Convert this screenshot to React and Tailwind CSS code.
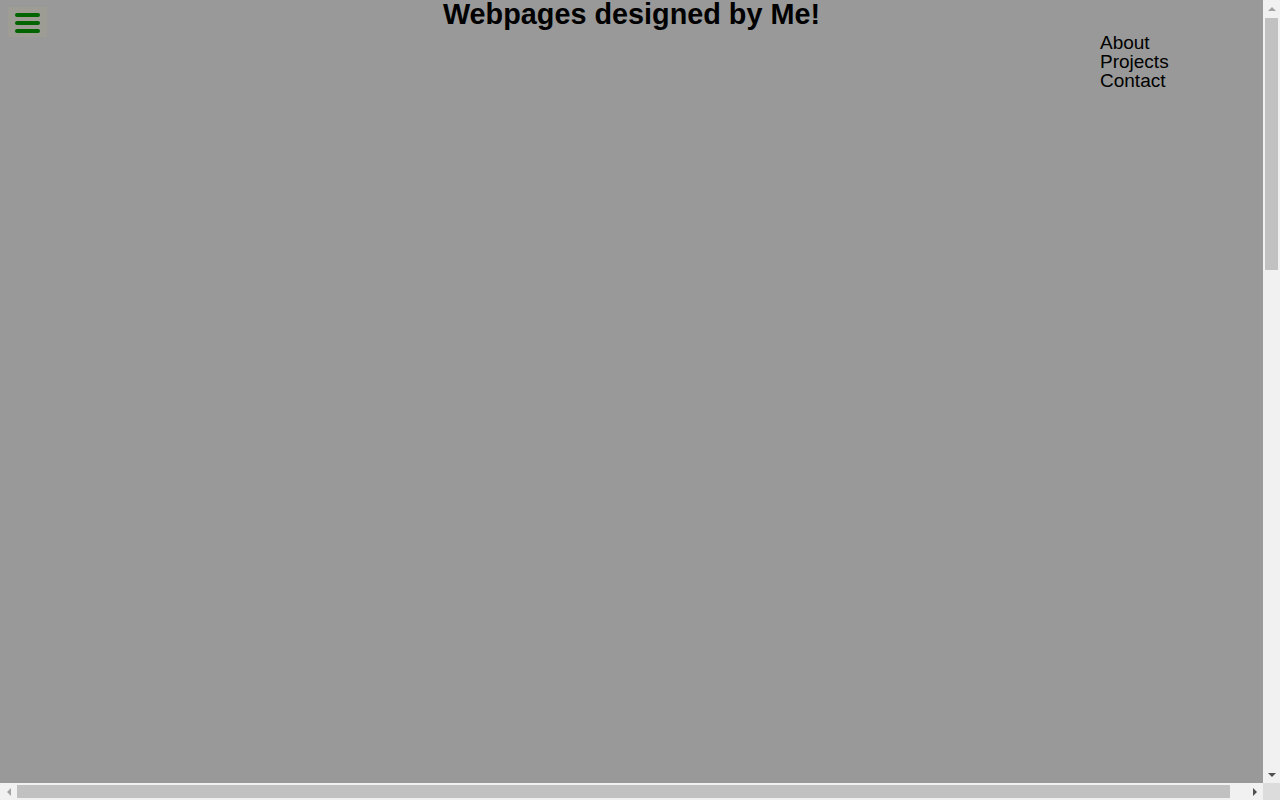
export default function App() {
  return (
    <div className="h-screen w-screen overflow-hidden grid grid-cols-[1fr_17px] grid-rows-[1fr_17px] bg-[#999999] font-['Liberation_Sans',Arial,sans-serif]">
      {/* Page viewport */}
      <div className="relative overflow-hidden text-black">
        <button
          className="absolute left-2 top-[7px] w-[39px] h-[30px] bg-[#9d9d95] flex flex-col items-center pt-[6px] gap-1"
          aria-label="Menu"
        >
          <span className="block w-[25px] h-1 rounded-full bg-[#006400]" />
          <span className="block w-[25px] h-1 rounded-full bg-[#006400]" />
          <span className="block w-[25px] h-1 rounded-full bg-[#006400]" />
        </button>

        <h1 className="text-center text-[28.8px] leading-[28px] font-bold">Webpages designed by Me!</h1>

        <div className="flex justify-end mt-[5px]">
          <nav className="w-[163px] flex flex-col text-[19px] leading-[19px]">
            <a href="#about">About</a>
            <a href="#projects">Projects</a>
            <a href="#contact">Contact</a>
          </nav>
        </div>
      </div>

      {/* Vertical scrollbar */}
      <div className="bg-[#f1f1f1] flex flex-col items-center">
        <div className="h-[17px] flex items-center justify-center">
          <span className="w-0 h-0 border-l-4 border-r-4 border-b-4 border-l-transparent border-r-transparent border-b-[#a3a3a3]" />
        </div>
        <div className="flex-1 w-full px-[2px] pt-[1px]">
          <div className="h-[252px] bg-[#c1c1c1]" />
        </div>
        <div className="h-[17px] flex items-center justify-center">
          <span className="w-0 h-0 border-l-4 border-r-4 border-t-4 border-l-transparent border-r-transparent border-t-[#505050]" />
        </div>
      </div>

      {/* Horizontal scrollbar */}
      <div className="bg-[#f1f1f1] flex items-center">
        <div className="w-[17px] flex items-center justify-center">
          <span className="w-0 h-0 border-t-4 border-b-4 border-r-4 border-t-transparent border-b-transparent border-r-[#a3a3a3]" />
        </div>
        <div className="flex-1 h-full py-[2px]">
          <div className="h-full w-[1213px] bg-[#c1c1c1]" />
        </div>
        <div className="w-[17px] flex items-center justify-center">
          <span className="w-0 h-0 border-t-4 border-b-4 border-l-4 border-t-transparent border-b-transparent border-l-[#505050]" />
        </div>
      </div>

      <div className="bg-[#dcdcdc]" />
    </div>
  )
}
